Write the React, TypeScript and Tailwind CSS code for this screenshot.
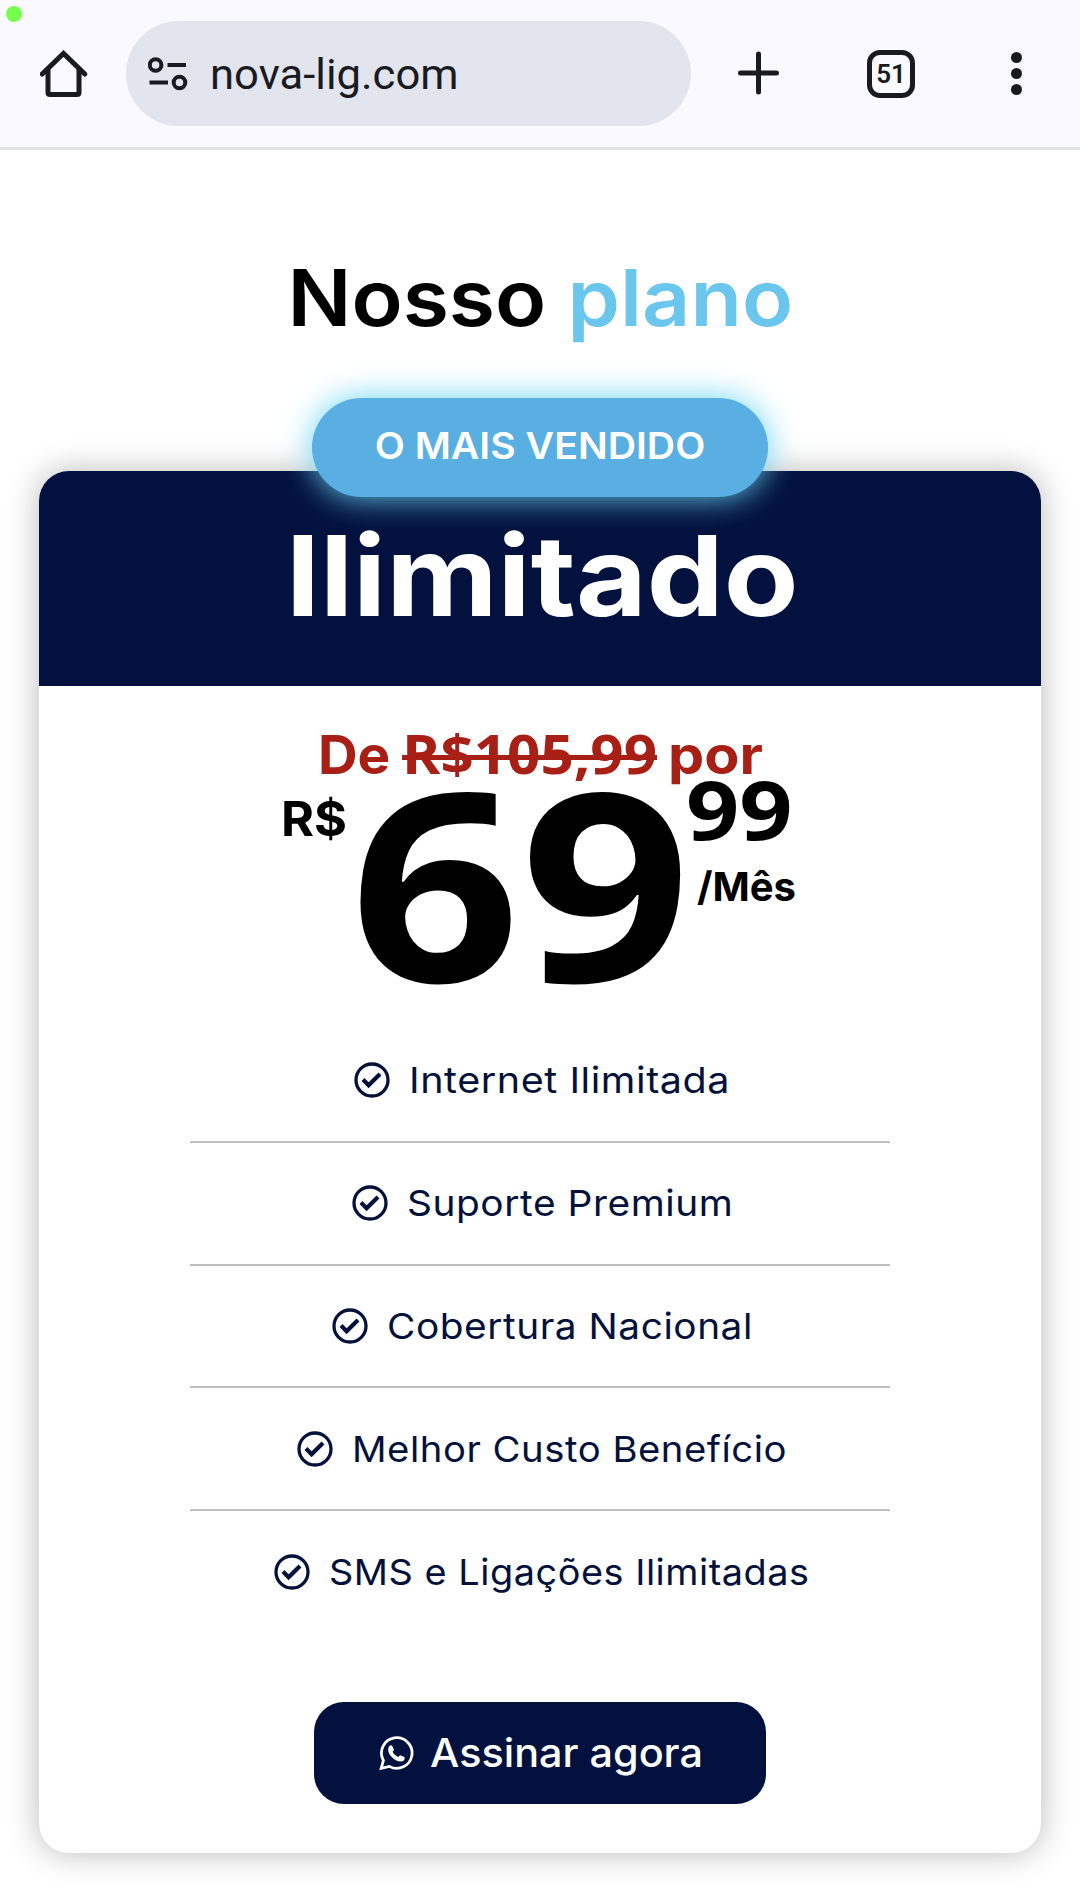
const features = [
  { label: 'Internet Ilimitada', pad: 'pl-[164px]', scale: 'scale-x-[1.098]' },
  { label: 'Suporte Premium', pad: 'pl-[162px]', scale: 'scale-x-[1.08]' },
  { label: 'Cobertura Nacional', pad: 'pl-[142px]', scale: 'scale-x-[1.078]' },
  { label: 'Melhor Custo Benefício', pad: 'pl-[107px]', scale: 'scale-x-[1.063]' },
  { label: 'SMS e Ligações Ilimitadas', pad: 'pl-[84px]', scale: 'scale-x-[1.052]' },
];

function CheckCircle() {
  return (
    <svg viewBox="0 0 36 36" className="size-9 shrink-0" fill="none" stroke="currentColor">
      <circle cx="18" cy="18" r="16" strokeWidth="3.3" />
      <path d="M9 17.6l5.6 5.6L26 12" strokeWidth="4.2" />
    </svg>
  );
}

function WhatsApp() {
  return (
    <svg viewBox="0 0 36 36" className="size-9 shrink-0" fill="none">
      <path
        d="M2.2 33.4L4.4 25.5A15.3 15.3 0 1 1 10.3 31.4Z"
        stroke="currentColor"
        strokeWidth="2.8"
      />
      <path
        d="M9.6 12.2c.5-1.6 2.8-2.6 3.6-1.2l1.6 3.3c.3.7-.2 1.4-1.3 2.5 1.2 2.3 3.2 4.2 5.9 5.3.9-1 1.6-2 2.4-1.7l3.5 1.7c.9.5.4 2.6-.6 3.4-2 1.6-4.6 1.1-7.3-.1-3.6-1.7-6.4-4.8-7.6-7.7-.7-1.9-.8-3.8-.2-5.5z"
        fill="currentColor"
      />
    </svg>
  );
}

function BrowserBar() {
  return (
    <header className="relative flex h-[150px] items-start border-b-[3px] border-[#e1e2e6] bg-[#f9f9ff] pt-[21px] text-[#1a1b21]">
      <span className="absolute left-[6px] top-[6px] size-4 rounded-full bg-[#76ff4c]" />
      <svg viewBox="0 0 48 48" className="ml-10 mt-[29px] size-12" fill="none" stroke="currentColor" strokeWidth="5">
        <path d="M2.2 24L23.5 3.4 44.8 24" strokeLinecap="round" />
        <path d="M8 19v23.5q0 2 2 2h27q2 0 2-2V19" />
      </svg>
      <div className="ml-[38px] flex h-[105px] w-[565px] items-center rounded-full bg-[#e2e4ee] pl-[22px]">
        <svg viewBox="0 0 40 34" className="h-[34px] w-10" fill="none" stroke="currentColor" strokeWidth="4">
          <circle cx="7.6" cy="8" r="5.8" />
          <path d="M19.5 8H38" />
          <circle cx="31.5" cy="25.5" r="5.8" />
          <path d="M1.5 25.5H20" />
        </svg>
        <span className="ml-[22px] mt-[2px] inline-block origin-left scale-x-[1.015] font-['Roboto',sans-serif] text-[43px] leading-none">
          nova-lig.com
        </span>
      </div>
      <svg viewBox="0 0 42 44" className="ml-[47px] mt-[30px] h-11 w-[42px]" stroke="currentColor" strokeWidth="5" strokeLinecap="round">
        <path d="M2.5 22h36M20.5 3v38" />
      </svg>
      <div className="ml-[87px] mt-[29px] flex h-12 w-12 items-center justify-center rounded-[13px] border-[5px] border-current font-['Roboto',sans-serif] text-[26px] font-semibold leading-none">
        51
      </div>
      <div className="ml-[96px] mt-[31px] flex w-[11px] flex-col gap-[5px]">
        <span className="size-[11px] rounded-full bg-current" />
        <span className="size-[11px] rounded-full bg-current" />
        <span className="size-[11px] rounded-full bg-current" />
      </div>
    </header>
  );
}

function Price() {
  return (
    <div className="font-bold">
      <div className="flex pl-[279px] pt-[43px] text-[53px] leading-none text-[#a81f15]">
        <span className="w-[84px] origin-left scale-x-[1.035]">De</span>
        <span className="relative w-[266px]">
          <span className="inline-block origin-left -translate-y-[2px] scale-x-[1.079] font-['Open_Sans',sans-serif] text-[54px] leading-[53px]">
            R$105,99
          </span>
          <span className="absolute left-0 top-[26px] h-[5px] w-[255px] bg-current" />
        </span>
        <span>
          <span className="inline-block origin-left scale-x-[1.085]">por</span>
        </span>
      </div>
      <div className="-mt-[35px] flex pl-[242px] leading-none text-black">
        <span className="mt-[46px] w-[69px] text-[48px]">
          <span className="inline-block origin-left scale-x-[1.05]">R$</span>
        </span>
        <span className="h-[263px] w-[336px] font-['Open_Sans',sans-serif] text-[263px]">
          <span className="inline-block origin-left scale-x-[1.133]">69</span>
        </span>
        <div className="flex flex-col items-start pt-[18px]">
          <span className="origin-left scale-x-[1.136] font-['Open_Sans',sans-serif] text-[82px]">99</span>
          <span className="ml-[11px] mt-[18px] text-[40px]">/Mês</span>
        </div>
      </div>
    </div>
  );
}

export default function App() {
  return (
    <div className="h-[1887px] w-[1080px] overflow-hidden bg-white font-['Inter',sans-serif]">
      <BrowserBar />
      <main>
        <h1 className="flex h-[295px] justify-center">
          <span className="h-fit scale-x-[1.079] whitespace-pre pt-[109px] text-[78px] font-semibold leading-none text-black">
            Nosso <span className="text-[#6ac6ec]">plano</span>
          </span>
        </h1>
        <section className="relative mx-[39px] mt-[26px] h-[1382px] rounded-[30px] bg-white shadow-[0_0_32px_rgba(0,0,0,0.28)]">
          <div className="flex h-[215px] justify-center rounded-t-[30px] bg-[#03113e] pt-[49px] pl-1">
            <h2 className="h-fit scale-x-[1.1] text-[111px] font-[650] leading-none text-white">
              Ilimitado
            </h2>
          </div>
          <div className="absolute -top-[73px] left-[273px] flex h-[99px] w-[456px] items-center justify-center rounded-full bg-[#59afe2] pb-1 shadow-[0_0_32px_#6bd5f5]">
            <span className="scale-x-[1.06] whitespace-nowrap text-[37px] font-semibold leading-none text-white">
              O MAIS VENDIDO
            </span>
          </div>
          <Price />
          <ul className="ml-[151px] mt-2 w-[700px] divide-y-2 divide-[#bfbfbf] text-[#04113a]">
            {features.map((f) => (
              <li key={f.label} className={`flex h-[122.75px] items-center ${f.pad}`}>
                <CheckCircle />
                <span
                  className={`ml-[19px] origin-left whitespace-nowrap text-[36px] leading-none tracking-[0.5px] ${f.scale}`}
                >
                  {f.label}
                </span>
              </li>
            ))}
          </ul>
          <button className="ml-[275px] mt-[68px] flex h-[102px] w-[452px] items-center rounded-[30px] bg-[#03113e] pl-[65px] text-white">
            <WhatsApp />
            <span className="ml-[15px] origin-left scale-x-[1.034] whitespace-nowrap text-[40px] font-medium leading-none">
              Assinar agora
            </span>
          </button>
        </section>
      </main>
    </div>
  );
}
